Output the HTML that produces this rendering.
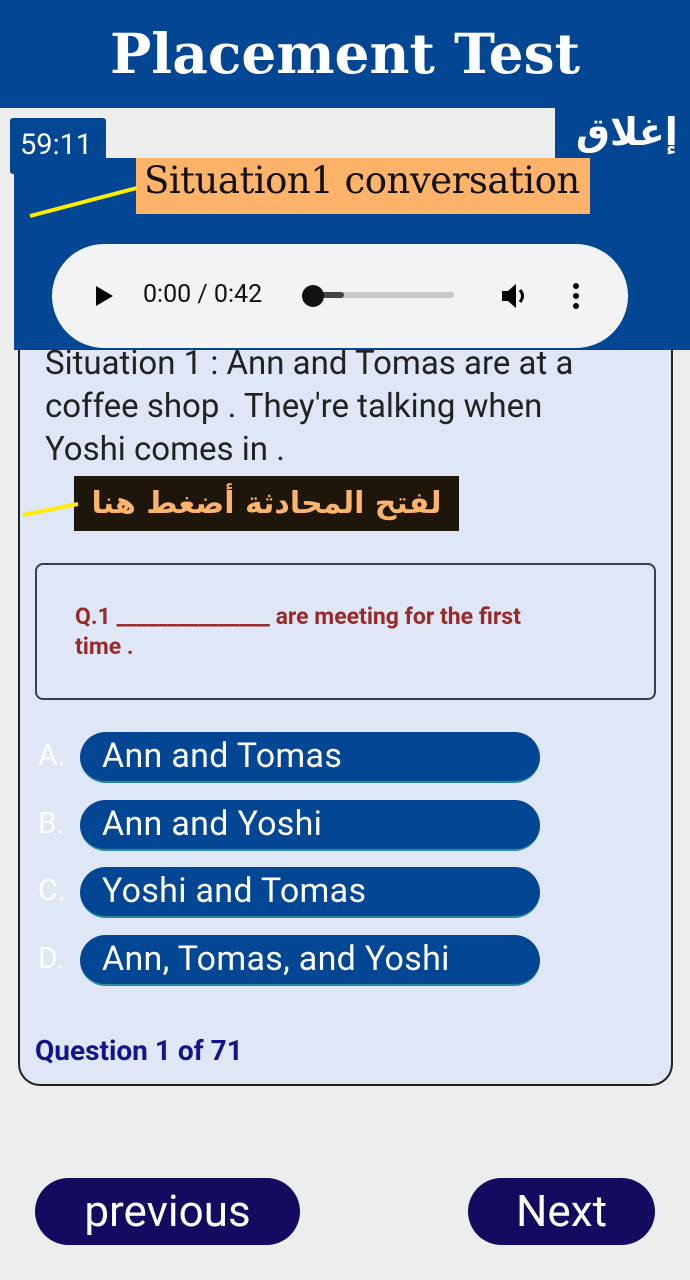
<!DOCTYPE html>
<html><head><meta charset="utf-8"><style>
*{margin:0;padding:0;box-sizing:border-box}
body{width:690px;height:1280px;background:#ededee;position:relative;overflow:hidden;font-family:"Roboto","Liberation Sans",sans-serif}
.abs{position:absolute}
.hdr{left:0;top:0;width:690px;height:108px;background:#034694;color:#fff;font:bold 55px "DejaVu Serif","Liberation Serif",serif;text-align:center;line-height:108px}
.card{left:18px;top:300px;width:655px;height:786px;background:#dfe6f5;border:2px solid #222;border-top:none;border-radius:0 0 22px 22px}
.opt{left:80px;width:460px;height:51px;background:#034694;border-radius:26px;border-bottom:2px solid #2a8a9a;color:#fff;font-size:34px;line-height:48px;padding-left:22px;letter-spacing:0.3px}
.lt{left:38px;color:#fff;font-size:30px;width:40px}
.btn{background:#130b5f;color:#fff;font-size:44px;text-align:center;line-height:66px;border-radius:34px;top:1178px;height:67px}
</style></head><body>
<div class="abs hdr">Placement Test</div>
<div class="abs card"></div>
<div class="abs" style="left:555px;top:108px;width:135px;height:60px;background:#034694"></div>
<div class="abs" style="left:14px;top:158px;width:676px;height:192px;background:#034694"></div>
<div class="abs" style="left:10px;top:118px;width:96px;height:56px;background:#034694;border-radius:3px;color:#fff;font-size:29px;padding:10px 0 0 10px">59:11</div>
<div class="abs" style="left:576px;top:110px;color:#fff;font:bold 38px 'DejaVu Sans',sans-serif;direction:rtl">إغلاق</div>
<div class="abs" style="left:136px;top:158px;width:454px;height:56px;background:#fdb46a;font:37px 'DejaVu Serif','Liberation Serif',serif;color:#111;padding:0 0 0 8px;line-height:46px;white-space:nowrap;letter-spacing:-0.5px">Situation1 conversation</div>
<svg class="abs" style="left:25px;top:185px" width="115" height="35"><line x1="5" y1="31" x2="112" y2="3" stroke="#ffee00" stroke-width="4"/></svg>
<div class="abs" style="left:52px;top:244px;width:576px;height:104px;background:#f1f3f4;border-radius:52px"></div>
<svg class="abs" style="left:94px;top:285px" width="20" height="22"><path d="M2 1 L19 11 L2 21Z" fill="#000"/></svg>
<div class="abs" style="left:143px;top:280px;font-size:25px;color:#111">0:00 / 0:42</div>
<div class="abs" style="left:302px;top:292px;width:152px;height:6px;background:#c8c8c8;border-radius:3px"></div>
<div class="abs" style="left:302px;top:292px;width:42px;height:6px;background:#444;border-radius:3px"></div>
<div class="abs" style="left:302px;top:285px;width:22px;height:22px;background:#111;border-radius:50%"></div>
<svg class="abs" style="left:500px;top:282px" width="32" height="28"><path d="M2 9h6l8-7v24l-8-7H2z" fill="#000"/><path d="M20 8q5 6 0 12" stroke="#000" stroke-width="3" fill="none"/></svg>
<div class="abs" style="left:573px;top:283px;width:6px;height:6px;background:#000;border-radius:50%"></div>
<div class="abs" style="left:573px;top:293px;width:6px;height:6px;background:#000;border-radius:50%"></div>
<div class="abs" style="left:573px;top:303px;width:6px;height:6px;background:#000;border-radius:50%"></div>
<div class="abs" style="left:45px;top:342px;width:555px;font-size:33px;line-height:43px;color:#222">Situation 1 : Ann and Tomas are at a coffee shop . They're talking when Yoshi comes in .</div>
<div class="abs" style="left:74px;top:476px;width:385px;height:55px;background:#1e150b;color:#fdb46a;font:bold 30px 'DejaVu Sans',sans-serif;text-align:center;line-height:55px;direction:rtl">لفتح المحادثة أضغط هنا</div>
<svg class="abs" style="left:20px;top:500px" width="60" height="20"><line x1="3" y1="15" x2="58" y2="4" stroke="#ffee00" stroke-width="4"/></svg>
<div class="abs" style="left:35px;top:563px;width:621px;height:137px;border:2px solid #3a3f48;border-radius:8px"></div>
<div class="abs" style="left:75px;top:602px;width:480px;font-weight:bold;font-size:23px;line-height:30px;color:#9a2a2a">Q.1 _______________ are meeting for the first time .</div>
<div class="abs lt" style="top:738px">A.</div><div class="abs opt" style="top:732px">Ann and Tomas</div>
<div class="abs lt" style="top:806px">B.</div><div class="abs opt" style="top:800px">Ann and Yoshi</div>
<div class="abs lt" style="top:873px">C.</div><div class="abs opt" style="top:867px">Yoshi and Tomas</div>
<div class="abs lt" style="top:941px">D.</div><div class="abs opt" style="top:935px">Ann, Tomas, and Yoshi</div>
<div class="abs" style="left:35px;top:1034px;font-weight:bold;font-size:28px;color:#13138a">Question 1 of 71</div>
<div class="abs btn" style="left:35px;width:265px">previous</div>
<div class="abs btn" style="left:468px;width:187px">Next</div>
</body></html>
